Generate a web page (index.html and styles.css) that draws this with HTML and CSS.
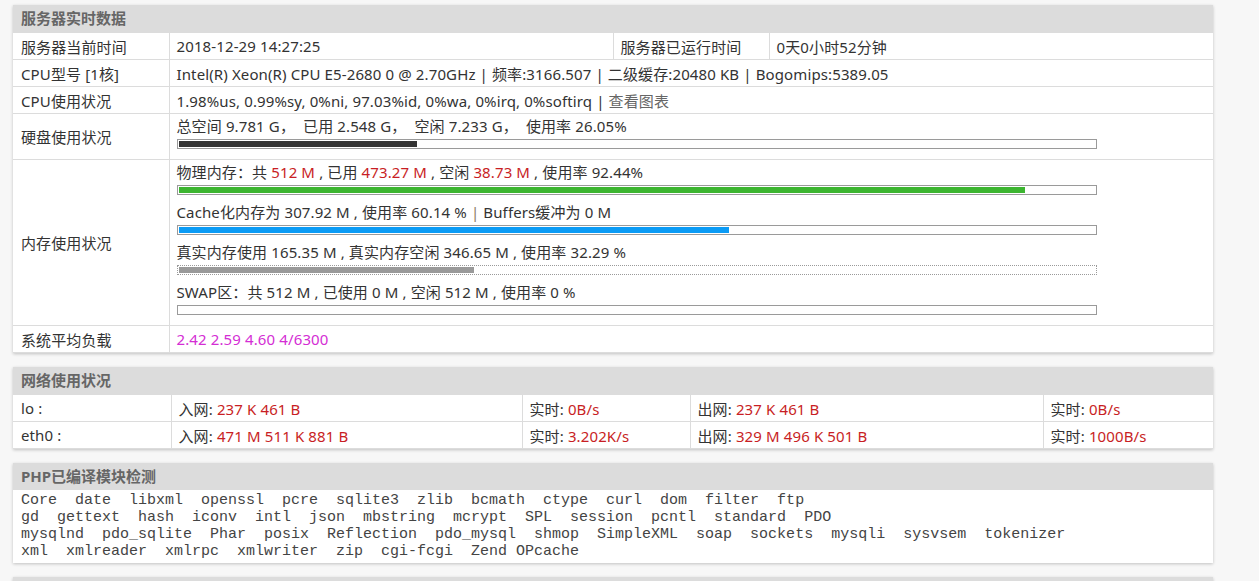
FILE: index.html
```html
<!DOCTYPE html>
<html lang="zh-CN">
<head>
    <meta charset="UTF-8">
    <title>服务器实时数据</title>
    <link rel="stylesheet" href="styles.css">
</head>
<body>
<div class="wrap">

    <!-- 服务器实时数据 -->
    <div class="panel">
        <div class="panel-hd">服务器实时数据</div>
        <table class="info">
            <colgroup>
                <col class="c-label"><col class="c-half"><col class="c-label"><col class="c-half">
            </colgroup>
            <tr>
                <td>服务器当前时间</td>
                <td>2018-12-29 14:27:25</td>
                <td>服务器已运行时间</td>
                <td>0天0小时52分钟</td>
            </tr>
            <tr>
                <td>CPU型号 [1核]</td>
                <td colspan="3">Intel(R) Xeon(R) CPU E5-2680 0 @ 2.70GHz | 频率:3166.507 | 二级缓存:20480 KB | Bogomips:5389.05</td>
            </tr>
            <tr>
                <td>CPU使用状况</td>
                <td colspan="3">1.98%us, 0.99%sy, 0%ni, 97.03%id, 0%wa, 0%irq, 0%softirq | <span class="muted">查看图表</span></td>
            </tr>
            <tr>
                <td>硬盘使用状况</td>
                <td colspan="3" class="bars">
                    <div class="line">总空间 9.781 G，&nbsp; 已用 2.548 G，&nbsp; 空闲 7.233 G，&nbsp; 使用率 26.05%</div>
                    <div class="bar"><div class="fill fill-dark" style="width:26.05%"></div></div>
                </td>
            </tr>
            <tr>
                <td>内存使用状况</td>
                <td colspan="3" class="bars">
                    <div class="line">物理内存：共 <span class="red">512 M</span> , 已用 <span class="red">473.27 M</span> , 空闲 <span class="red">38.73 M</span> , 使用率 92.44%</div>
                    <div class="bar"><div class="fill fill-green" style="width:92.44%"></div></div>
                    <div class="line">Cache化内存为 307.92 M , 使用率 60.14 % <span class="sep">|</span> Buffers缓冲为 0 M</div>
                    <div class="bar"><div class="fill fill-blue" style="width:60.14%"></div></div>
                    <div class="line">真实内存使用 165.35 M , 真实内存空闲 346.65 M , 使用率 32.29 %</div>
                    <div class="bar bar-dotted"><div class="fill fill-gray" style="width:32.29%"></div></div>
                    <div class="line">SWAP区：共 512 M , 已使用 0 M , 空闲 512 M , 使用率 0 %</div>
                    <div class="bar"><div class="fill" style="width:0%"></div></div>
                </td>
            </tr>
            <tr>
                <td>系统平均负载</td>
                <td colspan="3" class="load">2.42 2.59 4.60 4/6300</td>
            </tr>
        </table>
    </div>

    <!-- 网络使用状况 -->
    <div class="panel">
        <div class="panel-hd">网络使用状况</div>
        <table class="info net">
            <colgroup>
                <col class="n1"><col class="n2"><col class="n3"><col class="n4"><col class="n5">
            </colgroup>
            <tr>
                <td>lo :</td>
                <td>入网: <span class="red">237 K 461 B</span></td>
                <td>实时: <span class="red">0B/s</span></td>
                <td>出网: <span class="red">237 K 461 B</span></td>
                <td>实时: <span class="red">0B/s</span></td>
            </tr>
            <tr>
                <td>eth0 :</td>
                <td>入网: <span class="red">471 M 511 K 881 B</span></td>
                <td>实时: <span class="red">3.202K/s</span></td>
                <td>出网: <span class="red">329 M 496 K 501 B</span></td>
                <td>实时: <span class="red">1000B/s</span></td>
            </tr>
        </table>
    </div>

    <!-- PHP已编译模块检测 -->
    <div class="panel">
        <div class="panel-hd">PHP已编译模块检测</div>
        <div class="modules">Core&nbsp;&nbsp;date&nbsp;&nbsp;libxml&nbsp;&nbsp;openssl&nbsp;&nbsp;pcre&nbsp;&nbsp;sqlite3&nbsp;&nbsp;zlib&nbsp;&nbsp;bcmath&nbsp;&nbsp;ctype&nbsp;&nbsp;curl&nbsp;&nbsp;dom&nbsp;&nbsp;filter&nbsp;&nbsp;ftp<br>gd&nbsp;&nbsp;gettext&nbsp;&nbsp;hash&nbsp;&nbsp;iconv&nbsp;&nbsp;intl&nbsp;&nbsp;json&nbsp;&nbsp;mbstring&nbsp;&nbsp;mcrypt&nbsp;&nbsp;SPL&nbsp;&nbsp;session&nbsp;&nbsp;pcntl&nbsp;&nbsp;standard&nbsp;&nbsp;PDO<br>mysqlnd&nbsp;&nbsp;pdo_sqlite&nbsp;&nbsp;Phar&nbsp;&nbsp;posix&nbsp;&nbsp;Reflection&nbsp;&nbsp;pdo_mysql&nbsp;&nbsp;shmop&nbsp;&nbsp;SimpleXML&nbsp;&nbsp;soap&nbsp;&nbsp;sockets&nbsp;&nbsp;mysqli&nbsp;&nbsp;sysvsem&nbsp;&nbsp;tokenizer<br>xml&nbsp;&nbsp;xmlreader&nbsp;&nbsp;xmlrpc&nbsp;&nbsp;xmlwriter&nbsp;&nbsp;zip&nbsp;&nbsp;cgi-fcgi&nbsp;&nbsp;Zend OPcache</div>
    </div>

    <!-- 下一块，只露出头部的灰条 -->
    <div class="panel">
        <div class="panel-hd"></div>
    </div>

</div>
</body>
</html>
```

FILE: styles.css
```css
/* 页面底色和字体 */
html, body {
    margin: 0;
    background: #f7f7f7;
    font-family: "Noto Sans", "Noto Sans CJK SC", sans-serif;
    font-size: 15px;
    letter-spacing: 0.12px;
    color: #333;
}

.wrap {
    width: 1200px;
    padding: 5px 0 0 13px;
}

/* 每一块面板 */
.panel {
    background: #fff;
    box-shadow: 0 1px 3px rgba(0, 0, 0, 0.22);
    margin-bottom: 14px;
}

.panel-hd {
    height: 27px;
    line-height: 27px;
    padding: 0 8px;
    background: #dcdcdc;
    color: #666;
    font-weight: bold;
    letter-spacing: 0;
}

/* 表格 */
.info {
    width: 100%;
    border-collapse: collapse;
    table-layout: fixed;
}

.info td {
    height: 26px;
    padding: 0 7px;
    border: 1px solid #dcdcdc;
    white-space: nowrap;
    vertical-align: middle;
}

.info td:first-child {
    border-left: none;
    padding-left: 8px;
}

.info td:last-child {
    border-right: none;
}

.c-label { width: 156px; }
.c-half { width: 444px; }

.net .n1 { width: 158px; }
.net .n2 { width: 351px; }
.net .n3 { width: 168px; }
.net .n4 { width: 353px; }
.net .n5 { width: 170px; }

.muted { color: #666; }
.red { color: #c81e24; }
.sep { color: #8a7a66; }
.load { color: #d42ed4; }

/* 进度条 */
.bars {
    padding-top: 2px !important;
    padding-bottom: 3px !important;
}

.line {
    height: 20px;
    line-height: 20px;
}

.bar {
    width: 916px;
    height: 6px;
    padding: 1px;
    margin: 3px 0 7px 0;
    border: 1px solid #9a9a9a;
    background: #fff;
}

.bar-dotted {
    border-style: dotted;
}

.fill {
    height: 6px;
}

.fill-dark { background: #333; }
.fill-green { background: #3cb530; }
.fill-blue { background: #0b9bf5; }
.fill-gray { background: #999; }

/* 模块列表 */
.modules {
    padding: 2px 8px 3px;
    font-family: "Liberation Mono", monospace;
    font-size: 15px;
    line-height: 17px;
    letter-spacing: 0;
    color: #444;
}
```
